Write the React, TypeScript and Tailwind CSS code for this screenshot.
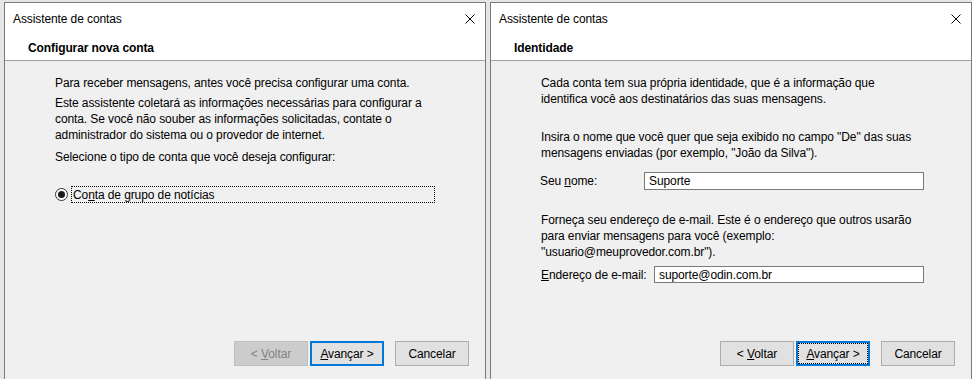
import React from 'react';

const font = { fontFamily: '"Liberation Sans", Arial, sans-serif' };

const CloseIcon = () => (
  <svg width="10" height="10" viewBox="0 0 10 10" className="text-black">
    <path d="M0.5 0.5 L9.5 9.5 M9.5 0.5 L0.5 9.5" stroke="currentColor" strokeWidth="1" fill="none" />
  </svg>
);

interface WindowProps {
  heading: string;
  children: React.ReactNode;
  backDisabled?: boolean;
  focused?: boolean;
}

const WizardWindow: React.FC<WindowProps> = ({ heading, children, backDisabled, focused }) => {
  return (
    <div className="w-[482px] h-full flex flex-col bg-[#f0f0f0] border border-b-0 border-[#7a7a7a] tracking-[-0.1px]">
      {/* Title bar */}
      <div className="h-[32px] flex items-center justify-between bg-white pl-[8px] pr-[10px]">
        <span className="text-[12px] text-black">Assistente de contas</span>
        <CloseIcon />
      </div>

      {/* Header */}
      <div className="h-[26px] flex items-start bg-white pl-[23px] border-b border-[#a0a0a0]">
        <span className="text-[12px] font-bold text-black leading-[16px] pt-[5px]">{heading}</span>
      </div>

      {/* Content */}
      <div className="flex-1 pl-[50px] pt-[14px] text-[12px] leading-[16px] text-black">{children}</div>

      {/* Buttons */}
      <div className="flex justify-end pr-[16px] pb-[13px] text-[12px]">
        <button
          className={`w-[74px] h-[25px] border ${
            backDisabled ? 'bg-[#cccccc] border-[#bfbfbf] text-[#838383]' : 'bg-[#e1e1e1] border-[#adadad] text-black'
          }`}
        >
          &lt; <u>V</u>oltar
        </button>
        <button
          className={`ml-[2px] w-[74px] h-[25px] bg-[#e1e1e1] text-black border-2 border-[#0078d7] ${
            focused ? 'outline-1 outline-dotted outline-black outline-offset-[-3px]' : ''
          }`}
        >
          <u>A</u>vançar &gt;
        </button>
        <button className="ml-[11px] w-[74px] h-[25px] bg-[#e1e1e1] border border-[#adadad] text-black">
          Cancelar
        </button>
      </div>
    </div>
  );
};

export default function App() {
  return (
    <div className="w-[972px] h-[379px] overflow-hidden bg-[#e6e6e6] flex gap-[4px] pl-[4px] pt-[2px]" style={font}>
      <WizardWindow heading="Configurar nova conta" backDisabled>
        <p>Para receber mensagens, antes você precisa configurar uma conta.</p>
        <p className="mt-[4px]">
          Este assistente coletará as informações necessárias para configurar a
          <br />
          conta. Se você não souber as informações solicitadas, contate o
          <br />
          administrador do sistema ou o provedor de internet.
        </p>
        <p className="mt-[6px]">Selecione o tipo de conta que você deseja configurar:</p>

        <div className="mt-[21px] flex items-center">
          <span className="w-[13px] h-[13px] rounded-full border border-[#333333] bg-white flex items-center justify-center">
            <span className="w-[7px] h-[7px] rounded-full bg-[#1a1a1a]" />
          </span>
          <span className="ml-[3px] w-[364px] h-[17px] border border-dotted border-black flex items-center pl-[1px]">
            Co<u>n</u>ta de grupo de notícias
          </span>
        </div>
      </WizardWindow>

      <WizardWindow heading="Identidade" focused>
        <p>
          Cada conta tem sua própria identidade, que é a informação que
          <br />
          identifica você aos destinatários das suas mensagens.
        </p>
        <p className="mt-[22px]">
          Insira o nome que você quer que seja exibido no campo "De" das suas
          <br />
          mensagens enviadas (por exemplo, "João da Silva").
        </p>
        <div className="mt-[11px] flex items-center pr-[47px]">
          <span className="w-[104px] -ml-[1px]">
            Seu <u>n</u>ome:
          </span>
          <div className="flex-1 h-[18px] bg-white border border-[#7a7a7a] flex items-center pl-[4px]">Suporte</div>
        </div>
        <p className="mt-[22px]">
          Forneça seu endereço de e-mail. Este é o endereço que outros usarão
          <br />
          para enviar mensagens para você (exemplo:
          <br />
          "usuario@meuprovedor.com.br").
        </p>
        <div className="mt-[6px] flex items-center pr-[47px]">
          <span className="w-[113px]">
            <u>E</u>ndereço de e-mail:
          </span>
          <div className="flex-1 h-[17px] bg-white border border-[#7a7a7a] flex items-center pl-[4px]">
            suporte@odin.com.br
          </div>
        </div>
      </WizardWindow>
    </div>
  );
}
